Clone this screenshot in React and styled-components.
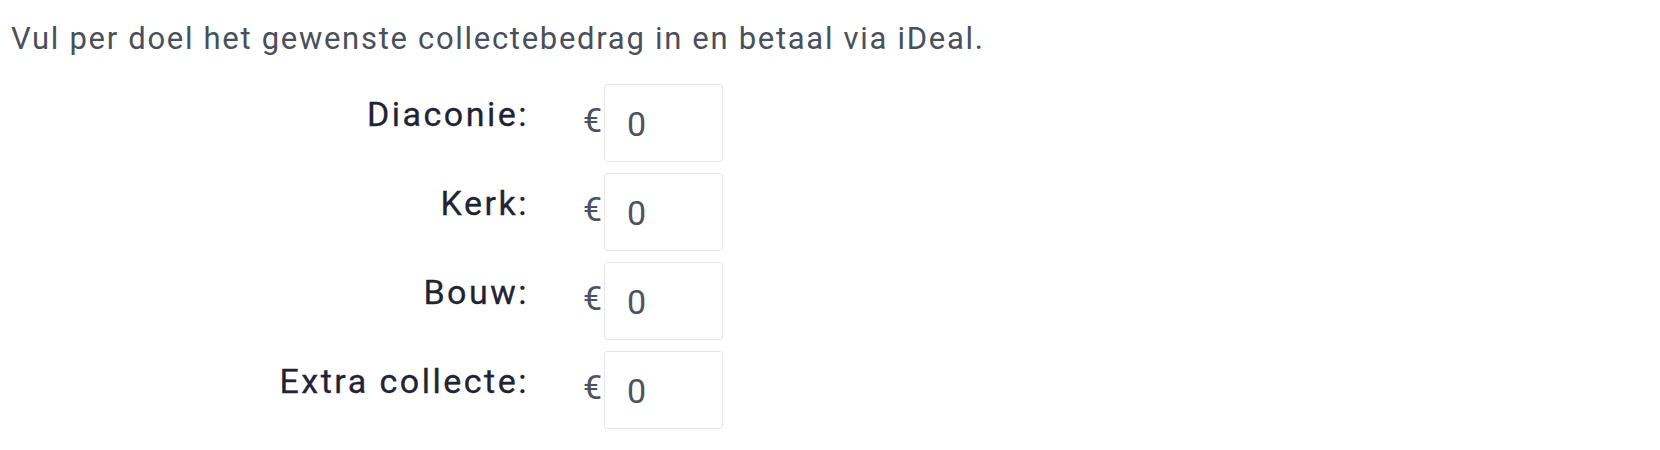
import React from "react";
import styled, { createGlobalStyle } from "styled-components";

const GlobalStyle = createGlobalStyle`
  body {
    margin: 0;
    background: #ffffff;
    font-family: Roboto, "Liberation Sans", sans-serif;
  }
`;

const Page = styled.div`
  padding: 21px 0 0 11px;
`;

const Intro = styled.p`
  margin: 0 0 27px 0;
  font-size: 31px;
  line-height: 36px;
  letter-spacing: 1.7px;
  color: #4a4f5c;
  font-weight: 400;
`;

const Form = styled.div`
  display: grid;
  grid-template-columns: 518px 75px 119px;
  row-gap: 11px;
  align-items: center;
`;

const Label = styled.label`
  justify-self: end;
  font-size: 34px;
  font-weight: 400;
  letter-spacing: 2.5px;
  color: #1f2334;
  margin-top: -18px;
  -webkit-text-stroke: 0.3px #1f2334;
`;

const Currency = styled.span`
  justify-self: end;
  margin-right: 2px;
  font-size: 34px;
  color: #4d5263;
  margin-top: -7px;
`;

const Amount = styled.input`
  box-sizing: border-box;
  width: 119px;
  height: 78px;
  padding: 2px 0 0 22px;
  border: 1px solid #e6e6e6;
  border-radius: 3px;
  font-family: Roboto, "Liberation Sans", sans-serif;
  font-size: 34px;
  font-weight: 400;
  color: #4d5263;
  background: #ffffff;
  outline: none;
`;

const goals = ["Diaconie", "Kerk", "Bouw", "Extra collecte"];

const App = () => (
  <Page>
    <GlobalStyle />
    <Intro>Vul per doel het gewenste collectebedrag in en betaal via iDeal.</Intro>
    <Form>
      {goals.map((goal) => (
        <React.Fragment key={goal}>
          <Label htmlFor={goal}>{goal}:</Label>
          <Currency>€</Currency>
          <Amount id={goal} type="text" defaultValue="0" />
        </React.Fragment>
      ))}
    </Form>
  </Page>
);

export default App;
